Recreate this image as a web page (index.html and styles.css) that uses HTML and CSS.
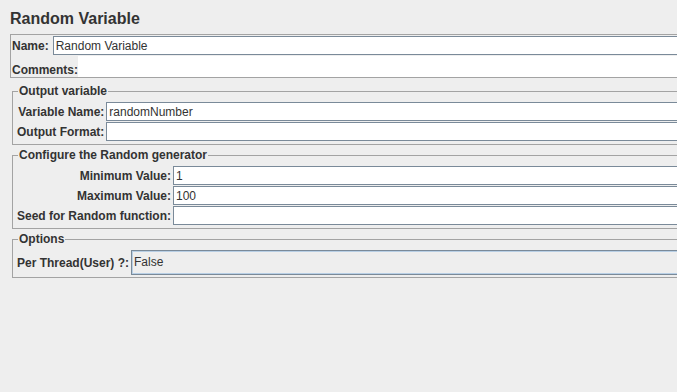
FILE: index.html
```html
<html>
<head>
  <title>Random Variable</title>
  <link rel="stylesheet" href="styles.css">
</head>
<body>
  <div class="page">
    <div class="header">Random Variable</div>

    <div class="name-panel">
      <div class="name-row">
        <label class="label">Name:</label>
        <input class="field" type="text" value="Random Variable">
      </div>
      <div class="comments-row">
        <label class="label">Comments:</label>
        <textarea class="comments"></textarea>
      </div>
    </div>

    <fieldset class="group">
      <legend>Output variable</legend>
      <div class="form">
        <label class="label">Variable Name:</label>
        <input class="field" type="text" value="randomNumber">
        <label class="label">Output Format:</label>
        <input class="field" type="text" value="">
      </div>
    </fieldset>

    <fieldset class="group">
      <legend>Configure the Random generator</legend>
      <div class="form">
        <label class="label">Minimum Value:</label>
        <input class="field" type="text" value="1">
        <label class="label">Maximum Value:</label>
        <input class="field" type="text" value="100">
        <label class="label">Seed for Random function:</label>
        <input class="field" type="text" value="">
      </div>
    </fieldset>

    <fieldset class="group options">
      <legend>Options</legend>
      <div class="option-row">
        <label class="label">Per Thread(User) ?:</label>
        <div class="combo">False</div>
      </div>
    </fieldset>
  </div>
</body>
</html>
```

FILE: styles.css
```css
html,
body {
  margin: 0;
  height: 100%;
  overflow: hidden;
  background-color: #eeeeee;
  font-family: "Liberation Sans", Arial, sans-serif;
  font-size: 12px;
  color: #333333;
}

.page {
  width: 760px;
  padding-left: 10px;
}

.header {
  font-size: 16px;
  font-weight: bold;
  line-height: 20px;
  margin-top: 9px;
  margin-bottom: 5px;
}

.label {
  font-weight: bold;
  line-height: 14px;
  white-space: nowrap;
}

.field {
  box-sizing: border-box;
  height: 19px;
  margin: 0;
  padding: 0 2px;
  border: 1px solid #7a8a99;
  background-color: #fff;
  font-family: "Liberation Sans", Arial, sans-serif;
  font-size: 12px;
  color: #333333;
  outline: none;
  min-width: 0;
}

/* name + comments box */
.name-panel {
  border: 1px solid #a3a3a3;
  padding: 1px 0 0 1px;
  display: flex;
  flex-direction: column;
  gap: 1px;
}

.name-row,
.comments-row {
  display: flex;
  align-items: center;
}

.name-row {
  gap: 4px;
}

.name-row .field {
  flex: 1;
}

.comments-row {
  align-items: flex-end;
}

.comments {
  flex: 1;
  height: 21px;
  margin: 0;
  padding: 0;
  border: none;
  resize: none;
  background-color: #fff;
  font-family: inherit;
  font-size: 12px;
  display: block;
}

/* titled groups */
.group {
  margin: 6px 0 0 2px;
  padding: 4px 0 3px 4px;
  border: 1px solid #a3a3a3;
  min-inline-size: 0;
}

.group + .group {
  margin-top: 3px;
}

.group legend {
  font-weight: bold;
  line-height: 14px;
  padding: 0 1px;
  margin-left: 1px;
}

.form {
  display: grid;
  grid-template-columns: auto 1fr;
  column-gap: 2px;
  row-gap: 1px;
  align-items: center;
}

.form .label {
  justify-self: end;
}

.options {
  padding-bottom: 2px;
}

.option-row {
  display: flex;
  align-items: center;
  gap: 2px;
}

.combo {
  flex: 1;
  box-sizing: border-box;
  height: 25px;
  line-height: 23px;
  padding: 0 2px;
  border: 1px solid #7a8a99;
  box-shadow: inset 0 0 0 1px #b8cfe5;
  background-color: #eeeeee;
}
```
